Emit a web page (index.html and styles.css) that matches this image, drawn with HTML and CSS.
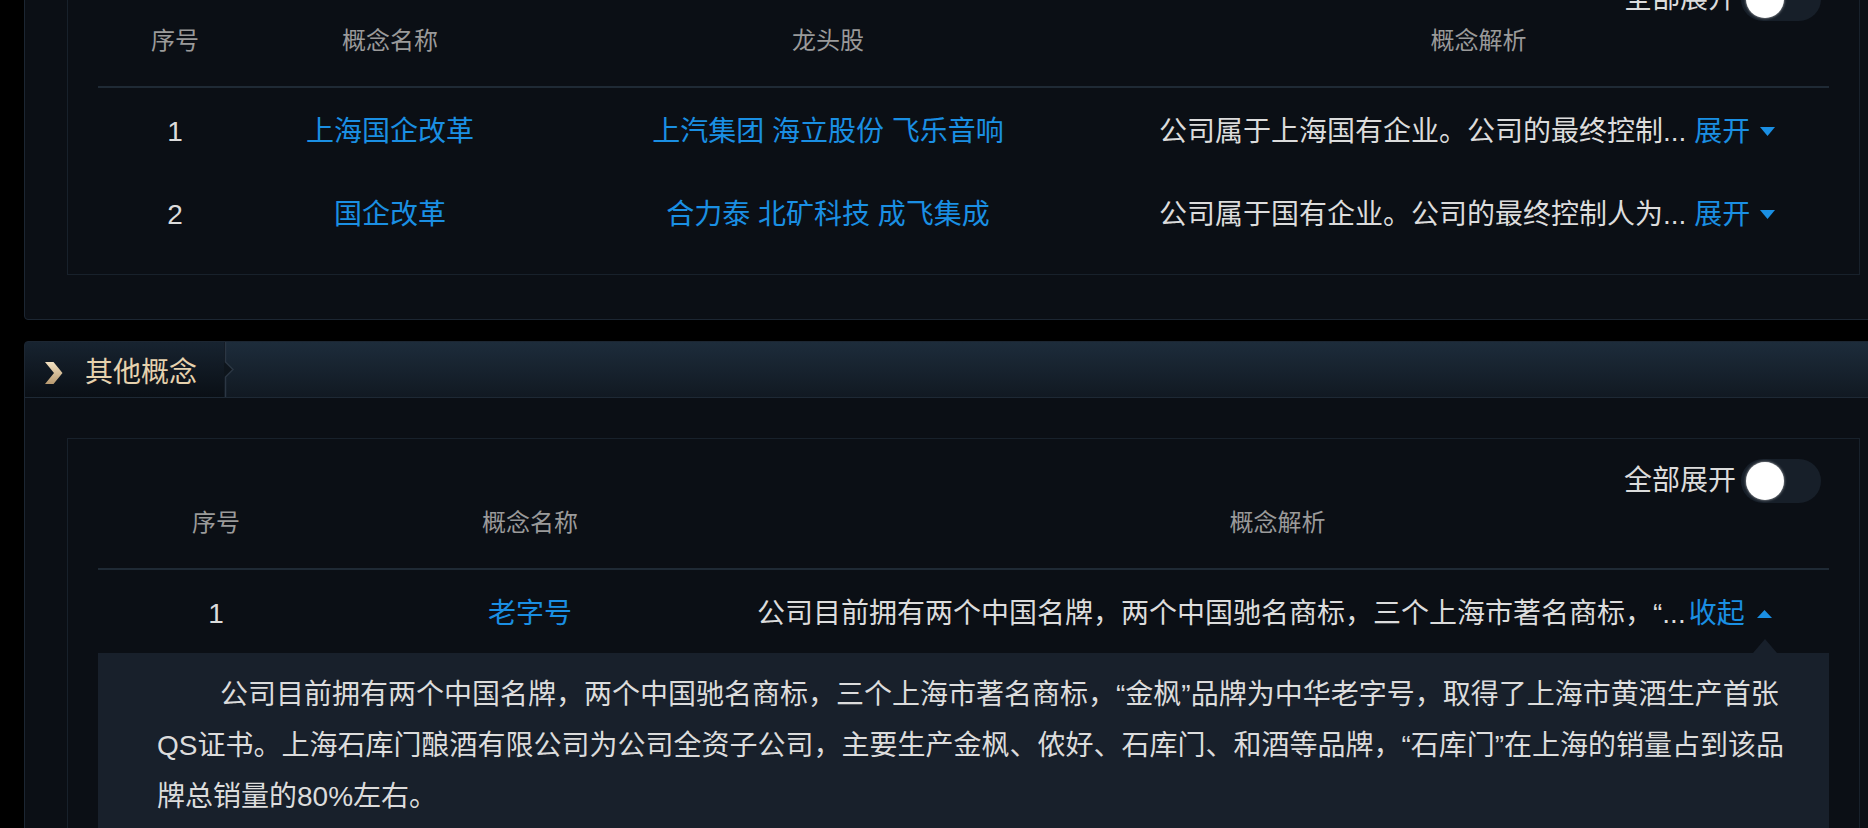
FILE: index.html
```html
<!DOCTYPE html>
<html lang="zh-CN">
<head>
<meta charset="utf-8">
<title>概念</title>
<link rel="stylesheet" href="styles.css">
</head>
<body>
<div class="page">
  <section class="panel panel--first">
    <div class="panel-body">
      <div class="board">
        <div class="toolbar">
          <span class="toolbar-label">全部展开</span>
          <span class="switch"><span class="knob"></span></span>
        </div>
        <div class="grid grid--4 grid-head">
          <div>序号</div><div>概念名称</div><div>龙头股</div><div>概念解析</div>
        </div>
        <div class="grid grid--4 grid-row">
          <div class="c-center">1</div>
          <div class="c-center"><a class="link" href="#">上海国企改革</a></div>
          <div class="c-center"><a class="link" href="#">上汽集团</a> <a class="link" href="#">海立股份</a> <a class="link" href="#">飞乐音响</a></div>
          <div class="c-desc">
            <span>公司属于上海国有企业。公司的最终控制...</span>
            <a class="more" href="#">展开<svg class="tri" width="15" height="9" viewBox="0 0 15 9"><polygon points="0,0 15,0 7.5,9" fill="#1a8fe3"/></svg></a>
          </div>
        </div>
        <div class="grid grid--4 grid-row">
          <div class="c-center">2</div>
          <div class="c-center"><a class="link" href="#">国企改革</a></div>
          <div class="c-center"><a class="link" href="#">合力泰</a> <a class="link" href="#">北矿科技</a> <a class="link" href="#">成飞集成</a></div>
          <div class="c-desc">
            <span>公司属于国有企业。公司的最终控制人为...</span>
            <a class="more" href="#">展开<svg class="tri" width="15" height="9" viewBox="0 0 15 9"><polygon points="0,0 15,0 7.5,9" fill="#1a8fe3"/></svg></a>
          </div>
        </div>
      </div>
    </div>
  </section>

  <section class="panel">
    <header class="panel-head">
      <div class="tab">
        <svg class="chev" width="20" height="22" viewBox="0 0 20 22">
          <defs>
            <linearGradient id="cg" x1="0" y1="0" x2="0" y2="1">
              <stop offset="0" stop-color="#f3e2c2"/>
              <stop offset="1" stop-color="#b89a70"/>
            </linearGradient>
          </defs>
          <polygon points="2,0 10.5,0 19.5,11 10.5,22 2,22 11,11" fill="url(#cg)"/>
        </svg>
        <span class="tab-title">其他概念</span>
      </div>
      <svg class="tab-edge" width="12" height="55" viewBox="0 0 12 55">
        <polygon points="0,0 1.5,0 1.5,20 9,27.5 1.5,35 1.5,55 0,55" fill="#0e151c"/>
        <polyline points="1.5,0 1.5,20 9,27.5 1.5,35 1.5,55" fill="none" stroke="#2b3643" stroke-width="1.5"/>
      </svg>
    </header>
    <div class="panel-body">
      <div class="board">
        <div class="toolbar">
          <span class="toolbar-label">全部展开</span>
          <span class="switch"><span class="knob"></span></span>
        </div>
        <div class="grid grid--3 grid-head">
          <div>序号</div><div>概念名称</div><div>概念解析</div>
        </div>
        <div class="grid grid--3 grid-row">
          <div class="c-center">1</div>
          <div class="c-center"><a class="link" href="#">老字号</a></div>
          <div class="c-desc">
            <span>公司目前拥有两个中国名牌，两个中国驰名商标，三个上海市著名商标，“...</span>
            <a class="more more--tight" href="#">收起<svg class="tri" width="15" height="8" viewBox="0 0 15 8"><polygon points="0,8 15,8 7.5,0" fill="#1a8fe3"/></svg></a>
          </div>
        </div>
        <div class="detail">
          <p class="detail-text">公司目前拥有两个中国名牌，两个中国驰名商标，三个上海市著名商标，“金枫”品牌为中华老字号，取得了上海市黄酒生产首张QS证书。上海石库门酿酒有限公司为公司全资子公司，主要生产金枫、侬好、石库门、和酒等品牌，“石库门”在上海的销量占到该品牌总销量的80%左右。</p>
        </div>
      </div>
    </div>
  </section>
</div>
</body>
</html>
```

FILE: styles.css
```css
* {
  box-sizing: border-box;
}

html,
body {
  margin: 0;
  height: 100%;
  overflow: hidden;
  background: #000;
}

body {
  font-family: "Liberation Sans", "Noto Sans CJK SC", sans-serif;
  color: #d9d9d9;
}

.page {
  width: 1903px;
  padding-left: 24px;
  margin-top: -85px;
}

.panel {
  background: #0b0f15;
  border: 1px solid #1c2632;
  border-radius: 4px;
  margin-bottom: 21px;
}

.panel-head {
  height: 56px;
  display: flex;
  background: linear-gradient(#1d2c3b, #111922);
  border-bottom: 1px solid #1e2935;
  border-radius: 3px 3px 0 0;
}

.tab {
  width: 200px;
  display: flex;
  align-items: center;
  padding-left: 18px;
  padding-top: 6px;
  gap: 22px;
  background: linear-gradient(#172330, #0a0f15);
  border-radius: 3px 0 0 0;
}

.tab-title {
  font-size: 28px;
  line-height: 34px;
  color: #e6d2ae;
}

.tab-edge {
  display: block;
  margin-left: -1px;
}

.panel-body {
  padding: 40px 42px 44px;
}

.board {
  border: 1px solid #18212b;
  padding: 20px 30px;
}

.toolbar {
  display: flex;
  justify-content: flex-end;
  align-items: center;
  height: 44px;
  gap: 5px;
  padding-right: 8px;
}

.toolbar-label {
  font-size: 28px;
  line-height: 44px;
  color: #dcdcdc;
}

.switch {
  display: flex;
  align-items: center;
  width: 80px;
  height: 44px;
  padding: 0 5px;
  border-radius: 22px;
  background: #171f29;
}

.knob {
  display: block;
  width: 38px;
  height: 38px;
  border-radius: 50%;
  background: #fff;
  box-shadow: 0 0 3px rgba(255, 255, 255, 0.7);
}

.grid {
  display: grid;
}

.grid--4 {
  grid-template-columns: 154px 276px 600px 701px;
}

.grid--3 {
  grid-template-columns: 236px 392px 1103px;
}

.grid-head {
  height: 67px;
  padding-top: 5px;
  border-bottom: 2px solid #1f2a35;
  font-size: 24px;
  line-height: 30px;
  color: #9a9a9a;
  text-align: center;
}

.grid-row {
  height: 83px;
  padding-top: 4px;
  align-items: center;
  font-size: 28px;
  line-height: 40px;
  color: #dcdcdc;
}

.c-center {
  text-align: center;
}

.c-desc {
  display: flex;
  align-items: center;
  padding-left: 31px;
  white-space: nowrap;
}

.link {
  color: #1a8fe3;
  text-decoration: none;
}

.more {
  display: flex;
  align-items: center;
  gap: 10px;
  margin-left: 8px;
  color: #1a8fe3;
  text-decoration: none;
}

.more--tight {
  margin-left: 3px;
  gap: 12px;
}

.tri {
  display: block;
}

.detail {
  position: relative;
  background: #18202b;
  padding: 16px 32px 40px 59px;
}

.detail::before {
  content: "";
  position: absolute;
  right: 52px;
  top: -14px;
  border-left: 12px solid transparent;
  border-right: 12px solid transparent;
  border-bottom: 14px solid #18202b;
}

.detail-text {
  margin: 0;
  font-size: 28px;
  line-height: 51px;
  text-indent: 63px;
  color: #dcdcdc;
}
```
